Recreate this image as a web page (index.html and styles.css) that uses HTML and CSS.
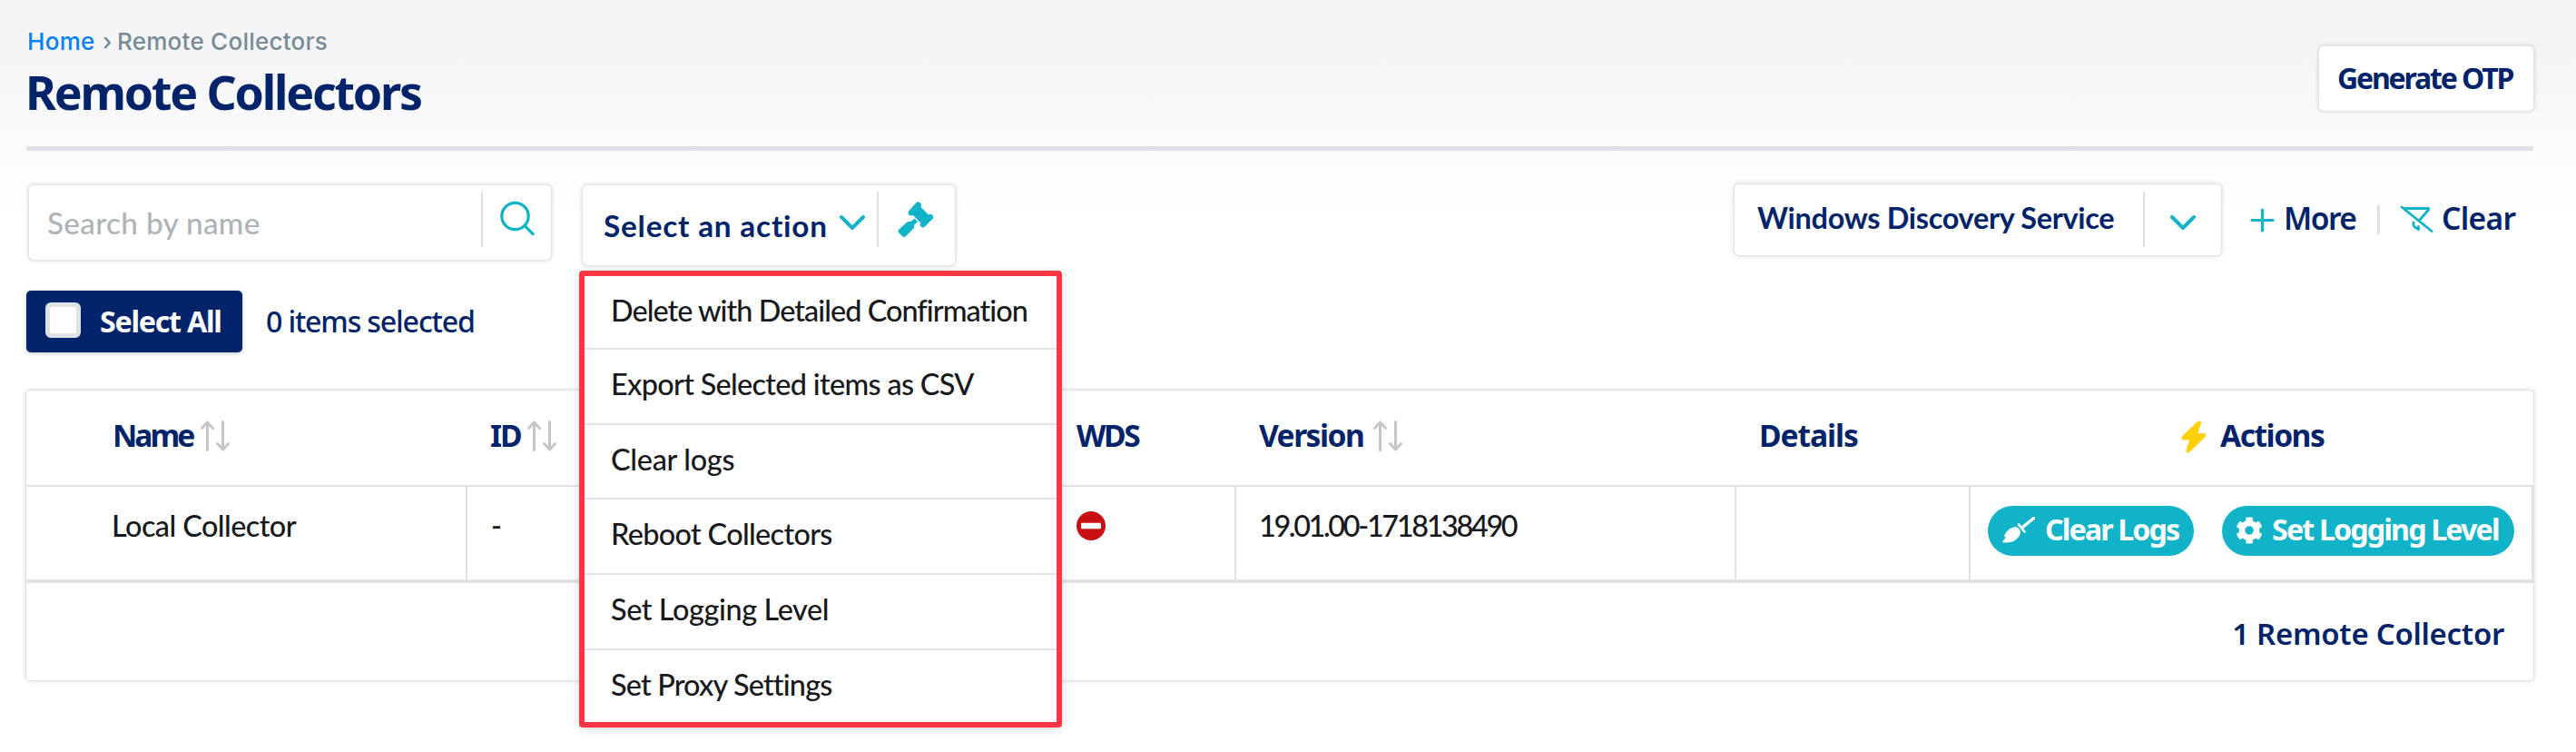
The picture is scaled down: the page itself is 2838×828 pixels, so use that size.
FILE: index.html
```html
<!DOCTYPE html>
<html lang="en">
<head>
<meta charset="utf-8">
<title>Remote Collectors</title>
<link rel="stylesheet" href="styles.css">
</head>
<body>
<svg class="defs" width="0" height="0" aria-hidden="true">
  <symbol id="sort" viewBox="0 0 32 34">
    <path d="M7.500 32.500V2M1.500 8.500L7.500 2L13.500 8.500M24.500 1.500V32M18.500 25.500L24.500 32L30.500 25.500" fill="none" stroke="#c6c6c6" stroke-width="3" stroke-linecap="round" stroke-linejoin="round"/>
  </symbol>
  <symbol id="chevron" viewBox="0 0 28 16">
    <path d="M2 2L14 14L26 2" fill="none" stroke="#10b3c7" stroke-width="4" stroke-linecap="round" stroke-linejoin="round"/>
  </symbol>
</svg>
<div class="page">
  <header class="header">
    <div>
      <nav class="crumbs"><a class="home">Home</a><span class="sep">›</span><span class="here">Remote Collectors</span></nav>
      <h1 class="title">Remote Collectors</h1>
    </div>
    <button class="otp"><span>Generate OTP</span></button>
  </header>

  <div class="toolbar">
    <div class="search">
      <span class="placeholder">Search by name</span>
      <span class="divider"></span>
      <svg width="38" height="40" viewBox="0 0 38 40"><circle cx="16.500" cy="17" r="14.700" fill="none" stroke="#10b3c7" stroke-width="3.200"/><path d="M27 27.500L36 36.500" stroke="#10b3c7" stroke-width="3.200" stroke-linecap="round"/></svg>
    </div>
    <div class="action">
      <span class="action-label">Select an action</span>
      <svg class="action-chevron" width="28" height="16"><use href="#chevron"/></svg>
      <span class="divider"></span>
      <svg class="gavel" width="40" height="40" viewBox="0 0 40 40" fill="#10b3c7"><path d="M20 1.500q2.500-2.500 5 0q2 2 .5 4.500L34 14.500q2.500-1.500 4.300.3q2 2.200 0 4.300L30 27.500q-2.500 2-4.500 0q-1.600-1.800-.3-4L17 15q-2.500 1.300-4.500-.5q-2-2.300 0-4.500z"/><path d="M18.500 18.500L22 22L18.200 25.800L18 29L9 38q-2 2-4 0L1.500 34.500q-2-2 0-4L11 22L14.500 22z"/></svg>
      <ul class="menu">
        <li class="m1">Delete with Detailed Confirmation</li>
        <li class="m2">Export Selected items as CSV</li>
        <li class="m3">Clear logs</li>
        <li class="m4">Reboot Collectors</li>
        <li class="m5">Set Logging Level</li>
        <li class="m6">Set Proxy Settings</li>
      </ul>
    </div>
    <div class="filter">
      <span class="filter-label">Windows Discovery Service</span>
      <span class="divider"></span>
      <svg width="28" height="16"><use href="#chevron"/></svg>
    </div>
    <div class="links">
      <svg width="27" height="27" viewBox="0 0 27 27"><path d="M13.500 2V25M2 13.500H25" stroke="#10b3c7" stroke-width="3.200" stroke-linecap="round"/></svg>
      <span class="more">More</span>
      <span class="bar"></span>
      <svg class="funnel" width="38" height="32" viewBox="0 0 38 32" fill="none" stroke="#10b3c7" stroke-width="2.800" stroke-linecap="round" stroke-linejoin="round"><path d="M2 2L35 28.500M6 3.500H31.500V5L21.500 16.500M15 19V22Q15.500 24 20.500 26.500V23.500"/></svg>
      <span class="clear">Clear</span>
    </div>
  </div>

  <div class="selection">
    <button class="select-all"><span class="box"></span><span class="sa-text">Select All</span></button>
    <span class="count">0 items selected</span>
  </div>

  <div class="table">
    <div class="row head">
      <div class="c1"><span class="h-name">Name</span><svg width="32" height="34"><use href="#sort"/></svg></div>
      <div class="c2"><span class="h-id">ID</span><svg width="32" height="34"><use href="#sort"/></svg></div>
      <div class="c3"><span class="h-wds">WDS</span></div>
      <div class="c4"><span class="h-ver">Version</span><svg width="32" height="34"><use href="#sort"/></svg></div>
      <div class="c5"><span class="h-det">Details</span></div>
      <div class="c6"><svg class="bolt" width="28" height="36" viewBox="0 0 28 36"><path d="M17.500 1.500Q22-1 22 3L18.500 14H25Q28.500 14.500 26.500 18L9.500 34.500Q5 37 5.500 32.500L9 21.500H2.500Q-1 21 1 17.500z" fill="#ffcf0a"/></svg><span class="h-act">Actions</span></div>
    </div>
    <div class="row data">
      <div class="c1"><span class="d-name">Local Collector</span></div>
      <div class="c2"><span class="dash">-</span></div>
      <div class="c3"><svg width="32" height="32" viewBox="0 0 32 32"><circle cx="16" cy="16" r="16" fill="#c81013"/><rect x="5" y="12.800" width="22" height="6.400" rx="1" fill="#fff"/></svg></div>
      <div class="c4"><span class="d-ver">19.01.00-1718138490</span></div>
      <div class="c5"></div>
      <div class="c6">
        <button class="pill pill-a"><svg width="36" height="29" viewBox="0 0 36 29" fill="#fff"><path d="M34.500 1.500L23 11" stroke="#fff" stroke-width="3.400" stroke-linecap="round"/><path d="M18 8.500L24.500 16.500" stroke="#fff" stroke-width="2.600" stroke-linecap="round"/><path d="M14.500 11Q17 11 19.500 15Q20.500 17.500 19 20.500Q14 29.500 1 28.500Q0 28.500.5 27L4 22.500L2.500 22Q1.500 21.500 3 19Q7 12 14.500 11z"/></svg><span>Clear Logs</span></button>
        <button class="pill pill-b"><svg width="30" height="30" viewBox="0 0 512 512"><path fill="#fff" d="M487.400 315.700l-42.600-24.600c4.300-23.200 4.300-47 0-70.200l42.600-24.600c4.900-2.800 7.100-8.600 5.500-14-11.100-35.600-30-67.800-54.700-94.600-3.800-4.100-10-5.100-14.800-2.300L380.800 110c-17.900-15.400-38.500-27.300-60.800-35.100V25.800c0-5.600-3.900-10.500-9.400-11.700-36.700-8.200-74.300-7.800-109.200 0-5.500 1.200-9.400 6.100-9.400 11.700V75c-22.200 7.900-42.800 19.800-60.800 35.100L88.700 85.500c-4.900-2.800-11-1.900-14.800 2.300-24.700 26.700-43.600 58.900-54.700 94.600-1.700 5.400.6 11.200 5.500 14L67.300 221c-4.300 23.200-4.300 47 0 70.200l-42.600 24.600c-4.900 2.800-7.100 8.600-5.500 14 11.100 35.600 30 67.800 54.700 94.600 3.800 4.100 10 5.100 14.800 2.300l42.600-24.600c17.900 15.400 38.500 27.300 60.800 35.100v49.200c0 5.600 3.900 10.500 9.400 11.700 36.700 8.200 74.300 7.800 109.200 0 5.500-1.200 9.400-6.100 9.400-11.700v-49.200c22.200-7.900 42.800-19.800 60.800-35.100l42.600 24.600c4.900 2.800 11 1.900 14.800-2.300 24.700-26.700 43.600-58.900 54.700-94.600 1.500-5.500-.7-11.300-5.600-14.100zM256 336c-44.100 0-80-35.900-80-80s35.900-80 80-80 80 35.900 80 80-35.900 80-80 80z"/></svg><span>Set Logging Level</span></button>
      </div>
    </div>
    <div class="foot"><span>1 Remote Collector</span></div>
  </div>
</div>
</body>
</html>
```

FILE: styles.css
```css
* { box-sizing: border-box; }
body {
  margin: 0;
  min-height: 828px;
  background: linear-gradient(#f4f4f7 0, #f5f5f8 60px, #fbfbfc 160px, #fff 240px) no-repeat #fff;
  font-family: Lato, sans-serif;
  font-weight: 500;
  color: #17191c;
}
button { border: 0; margin: 0; padding: 0; font: inherit; color: inherit; }
svg { display: block; flex: none; }
span { white-space: nowrap; }
.defs { position: absolute; }
.page { padding: 0 47px 0 29px; }

.header {
  display: flex;
  justify-content: space-between;
  align-items: flex-start;
  height: 166px;
  border-bottom: 5px solid #dee1e6;
}
.crumbs {
  display: flex;
  padding: 31px 0 0 1px;
  font: 500 26px/30px Inter, sans-serif;
  color: #778b94;
}
.home { color: #0080f5; letter-spacing: .3px; width: 83px; }
.sep { width: 16px; }
.here { letter-spacing: .25px; }
.title {
  margin: 10px 0 0 -1px;
  font: 700 51.800px/60px "Noto Sans", sans-serif;
  letter-spacing: -2.180px;
  color: #002369;
}
.otp, .search, .action, .filter {
  background: #fff;
  border-radius: 5px;
  box-shadow: 0 0 0 1px #e4e4e4, 0 0 4px 1px rgba(0, 0, 0, .16);
}
.otp {
  width: 236px;
  height: 71px;
  margin-top: 51px;
  padding: 0 0 2px 20px;
  text-align: left;
  font: 700 32px/69px "Noto Sans", sans-serif;
  letter-spacing: -2.150px;
  color: #002369;
}

.toolbar {
  display: flex;
  align-items: flex-start;
  height: 154px;
  padding: 38px 0 0 3px;
}
.divider { width: 2px; height: 61px; background: #dcdfe3; flex: none; }
.search { display: flex; width: 575px; height: 82px; padding: 7px 0 0 20px; }
.placeholder {
  width: 478px;
  font-size: 33.300px;
  font-weight: 500;
  line-height: 69px;
  letter-spacing: .3px;
  color: #aeb3b8;
}
.search svg { margin: 10px 0 0 19px; }
.action {
  position: relative;
  display: flex;
  width: 410px;
  height: 88px;
  margin-left: 35px;
  padding: 7px 0 0 23px;
}
.action-label {
  width: 260px;
  font-size: 33.300px;
  font-weight: 700;
  line-height: 75px;
  letter-spacing: .8px;
  color: #002369;
}
.action-chevron { margin: 26px 13px 0 0; }
.gavel { margin: 11px 0 0 21px; }
.menu {
  position: absolute;
  z-index: 2;
  left: -4px;
  top: 94px;
  width: 532px;
  height: 503px;
  margin: 0;
  padding: 0;
  list-style: none;
  background: #fff;
  border: 6px solid #fc3544;
  border-radius: 4px;
  box-shadow: 0 2px 10px rgba(0, 0, 0, .16);
}
.menu li {
  height: 82.700px;
  padding-left: 29px;
  font-size: 32.400px;
  line-height: 76px;
  border-bottom: 2px solid #dee1e6;
}
.menu li:first-child { height: 81px; }
.menu li:last-child { border-bottom: 0; }
.m1 { letter-spacing: -.95px; }
.m2 { letter-spacing: -.68px; }
.m3 { letter-spacing: -.28px; }
.m4 { letter-spacing: -.66px; }
.m5 { letter-spacing: -.40px; }
.m6 { letter-spacing: -.82px; }

.filter {
  display: flex;
  width: 536px;
  height: 78px;
  margin: -1px 0 0 auto;
  padding: 8px 0 0 25px;
}
.filter-label {
  width: 425px;
  font-size: 32.400px;
  font-weight: 700;
  line-height: 57px;
  letter-spacing: -.28px;
  color: #002369;
}
.filter svg { margin: 26px 0 0 28px; }
.links {
  display: flex;
  width: 344px;
  padding-left: 32px;
  font: 600 33.600px/72px "Noto Sans", sans-serif;
  color: #002369;
}
.links > svg:first-child { margin: 25px 10px 0 0; }
.more { width: 103px; letter-spacing: -1.500px; }
.bar { width: 3px; height: 32px; margin: 22px 22px 0 0; background: #dee1e6; }
.funnel { margin: 22px 8px 0 0; }
.clear { letter-spacing: -.70px; }

.selection { display: flex; height: 110px; }
.select-all {
  display: flex;
  width: 238px;
  height: 68px;
  padding: 13px 0 0 21px;
  background: #002369;
  border-radius: 5px;
  box-shadow: 0 1px 4px rgba(0, 0, 0, .25);
}
.box {
  width: 39px;
  height: 39px;
  margin-right: 21px;
  background: #fff;
  border: 5px solid #dee1e6;
  border-radius: 6px;
}
.sa-text {
  font: 700 32.200px/41px "Noto Sans", sans-serif;
  letter-spacing: -1.250px;
  color: #fff;
}
.count {
  margin-left: 26px;
  font: 500 32.200px/67px "Noto Sans", sans-serif;
  letter-spacing: -1.180px;
  color: #002369;
}

.table {
  width: 2762px;
  height: 319px;
  background: #fff;
  border-radius: 4px;
  box-shadow: 0 0 0 1px #e2e2e2, 0 0 4px 1px rgba(0, 0, 0, .16);
}
.row { display: grid; grid-template-columns: 484px 647px 200px 551px 258px 622px; }
.row > div { display: flex; }
.head {
  height: 106px;
  border-bottom: 2px solid #dee1e6;
  font: 700 33.600px/99px "Noto Sans", sans-serif;
  color: #002369;
}
.head svg { margin: 33px 0 0 9px; }
.head .bolt { margin: 33px 15px 0 234px; }
.row .c1 { padding-left: 97px; }
.head .c2 { padding-left: 30px; }
.data .c2 { padding-left: 26px; }
.row .c3 { padding-left: 26px; }
.row .c4 { padding-left: 27px; }
.row .c5 { padding-left: 27px; }
.h-name { width: 88px; margin-left: -2px; letter-spacing: -3px; }
.h-id { width: 32px; margin-left: -3px; letter-spacing: -2px; }
.h-wds { letter-spacing: -2.400px; }
.h-ver { width: 117px; letter-spacing: -1.530px; }
.h-det { letter-spacing: -1.080px; }
.h-act { letter-spacing: -1.510px; }
.data {
  height: 106px;
  border-bottom: 4px solid #dee1e6;
  border-right: 2px solid #dee1e6;
  font-size: 32.400px;
  line-height: 85px;
}
.data > div + div { border-left: 2px solid #dee1e6; }
.d-name { margin-left: -3px; letter-spacing: -.56px; }
.data > div.c3 { border-left: 0; }
.data .c3 svg { margin-top: 27px; }
.d-ver { margin-left: -2px; letter-spacing: -2.350px; }
.data .c6 { padding: 21px 0 0 19px; }
.pill {
  display: flex;
  height: 55px;
  background: #10b3c7;
  border-radius: 28px;
  font: 700 32.200px/52px "Noto Sans", sans-serif;
  color: #fff;
}
.pill-a { width: 227px; padding-left: 16px; margin-right: 31px; letter-spacing: -1.890px; }
.pill-a svg { margin: 12px 11px 0 0; }
.pill-b { width: 322px; padding-left: 15px; letter-spacing: -1.850px; }
.pill-b svg { margin: 12px 10px 0 0; }
.foot {
  display: flex;
  justify-content: flex-end;
  padding-right: 32px;
  font: 600 32.900px/111px "Noto Sans", sans-serif;
  letter-spacing: -.25px;
  color: #002369;
}
```
